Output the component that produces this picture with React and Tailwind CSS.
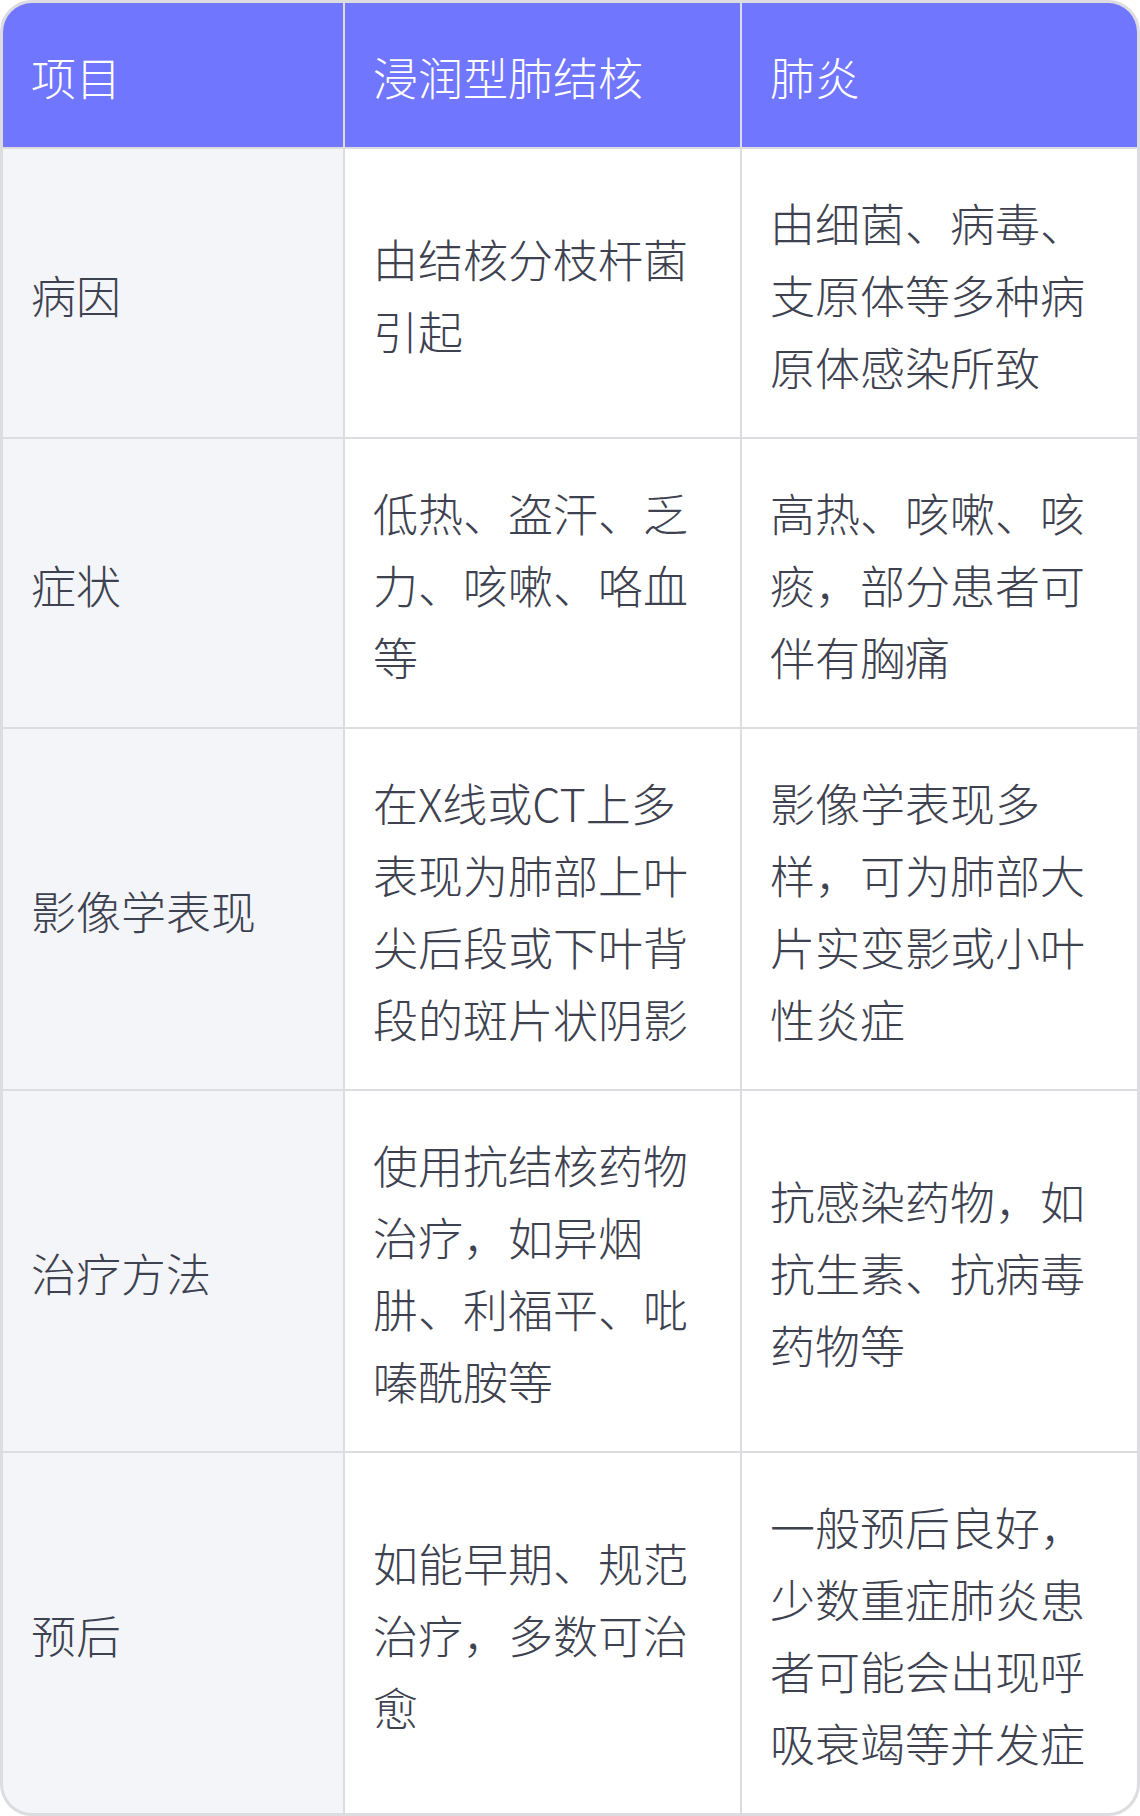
import React from "react";

const rows = [
  ["病因", "由结核分枝杆菌引起", "由细菌、病毒、支原体等多种病原体感染所致"],
  ["症状", "低热、盗汗、乏力、咳嗽、咯血等", "高热、咳嗽、咳痰，部分患者可伴有胸痛"],
  ["影像学表现", "在X线或CT上多表现为肺部上叶尖后段或下叶背段的斑片状阴影", "影像学表现多样，可为肺部大片实变影或小叶性炎症"],
  ["治疗方法", "使用抗结核药物治疗，如异烟肼、利福平、吡嗪酰胺等", "抗感染药物，如抗生素、抗病毒药物等"],
  ["预后", "如能早期、规范治疗，多数可治愈", "一般预后良好，少数重症肺炎患者可能会出现呼吸衰竭等并发症"],
];

export default function App() {
  return (
    <div
      className="w-[1140px] bg-white"
      style={{ fontFamily: '"Noto Sans CJK SC", "Noto Sans", sans-serif' }}
    >
      <div className="border-[3px] border-[#dcdce1] rounded-[32px] overflow-hidden bg-[#dcdce1]">
        <div className="grid grid-cols-[340px_395px_395px] gap-[2px] text-[45px] leading-[72px] font-light">
          {["项目", "浸润型肺结核", "肺炎"].map((h) => (
            <div key={h} className="bg-[#7176ff] text-white px-[28px] pt-[38px] pb-[34px]">
              {h}
            </div>
          ))}
          {rows.map((r, i) => (
            <React.Fragment key={i}>
              <div className="bg-[#f4f5f9] text-[#3e4250] px-[28px] pt-[38px] pb-[34px] flex items-center">
                {r[0]}
              </div>
              <div className="bg-white text-[#3e4250] px-[28px] pt-[38px] pb-[34px] flex items-center">
                <span>{r[1]}</span>
              </div>
              <div className="bg-white text-[#3e4250] px-[28px] pt-[38px] pb-[34px] flex items-center">
                <span>{r[2]}</span>
              </div>
            </React.Fragment>
          ))}
        </div>
      </div>
    </div>
  );
}
